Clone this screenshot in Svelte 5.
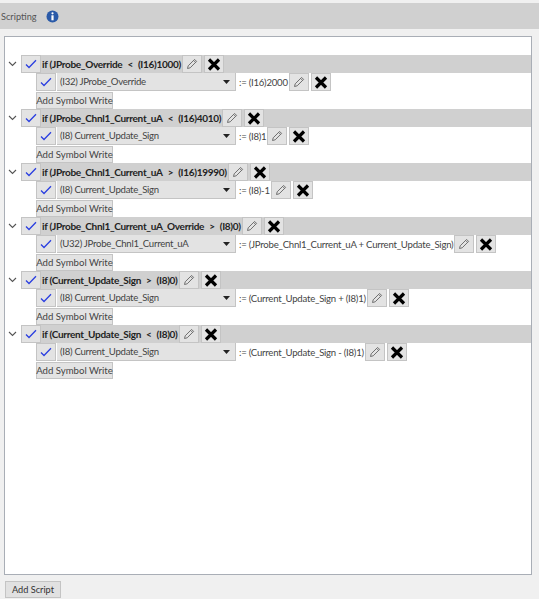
<script>
	const scripts = [
		{ cond: ["if (JProbe_Override", "<", "(I16)1000)"], sym: "(I32) JProbe_Override", val: ":= (I16)2000" },
		{ cond: ["if (JProbe_Chnl1_Current_uA", "<", "(I16)4010)"], sym: "(I8) Current_Update_Sign", val: ":= (I8)1" },
		{ cond: ["if (JProbe_Chnl1_Current_uA", ">", "(I16)19990)"], sym: "(I8) Current_Update_Sign", val: ":= (I8)-1" },
		{ cond: ["if (JProbe_Chnl1_Current_uA_Override", ">", "(I8)0)"], sym: "(U32) JProbe_Chnl1_Current_uA", val: ":= (JProbe_Chnl1_Current_uA + Current_Update_Sign)" },
		{ cond: ["if (Current_Update_Sign", ">", "(I8)0)"], sym: "(I8) Current_Update_Sign", val: ":= (Current_Update_Sign + (I8)1)" },
		{ cond: ["if (Current_Update_Sign", "<", "(I8)0)"], sym: "(I8) Current_Update_Sign", val: ":= (Current_Update_Sign - (I8)1)" }
	];
</script>

{#snippet check()}
	<span class="btn check">
		<svg width="12" height="10" viewBox="0 0 12 10"><path d="M1 5.5 L4 8.5 L11 1.2" fill="none" stroke="#2b3fe0" stroke-width="1.3" /></svg>
	</span>
{/snippet}

{#snippet tools()}
	<span class="btn tool">
		<svg width="12" height="12" viewBox="0 0 12 12"><path d="M1.5 10.5 L2.2 7.8 L8.6 1.4 L10.6 3.4 L4.2 9.8 Z M7.6 2.4 L9.6 4.4" fill="none" stroke="#707070" stroke-width="1" /></svg>
	</span>
	<span class="btn tool">
		<svg width="14" height="13" viewBox="0 0 14 13"><path d="M2 1.5 L12 11.5 M12 1.5 L2 11.5" fill="none" stroke="#000" stroke-width="3.2" /></svg>
	</span>
{/snippet}

<div class="page">
	<div class="title">
		<span>Scripting</span>
		<svg width="13" height="13" viewBox="0 0 13 13">
			<circle cx="6.5" cy="6.5" r="6" fill="#2a5aa8" />
			<circle cx="6.5" cy="3.3" r="1.1" fill="#fff" />
			<rect x="5.4" y="5.3" width="2.2" height="5" fill="#fff" />
		</svg>
	</div>

	<div class="panel">
		{#each scripts as s}
			<div class="script">
				<div class="head">
					<svg class="chev" width="9" height="6" viewBox="0 0 9 6"><path d="M1 1 L4.5 4.5 L8 1" fill="none" stroke="#555" stroke-width="1.1" /></svg>
					<div class="bar">
						{@render check()}
						<b class="cond">{s.cond[0]}<i>{s.cond[1]}</i>{s.cond[2]}</b>
						{@render tools()}
					</div>
				</div>
				<div class="write">
					{@render check()}
					<div class="select">
						<span>{s.sym}</span>
						<svg width="7" height="4" viewBox="0 0 7 4"><path d="M0 0 H7 L3.5 4 Z" fill="#222" /></svg>
					</div>
					<span class="val">{s.val}</span>
					{@render tools()}
				</div>
				<div class="btn add">Add Symbol Write</div>
			</div>
		{/each}
	</div>

	<div class="foot">
		<div class="add-script">Add Script</div>
	</div>
</div>

<style>
	:global(body) {
		background: #f0f0f0;
	}

	.page {
		width: 539px;
		height: 599px;
		padding-top: 3px;
		box-sizing: border-box;
		font-family: Lato, sans-serif;
		font-size: 9.6px;
		color: #444;
		overflow: hidden;
	}

	.title {
		height: 26px;
		background: #d0d0d0;
		display: flex;
		align-items: center;
		gap: 9px;
		padding-left: 1px;
		color: #555;
		font-size: 9.2px;
	}

	.panel {
		margin: 7px 7px 0 4px;
		height: 539px;
		box-sizing: border-box;
		background: #fff;
		border: 1px solid #a9aeb6;
		padding-top: 18px;
	}

	.script {
		height: 54px;
	}

	.head {
		display: flex;
		align-items: center;
		height: 18px;
	}

	.chev {
		margin: 0 4px 0 3px;
		flex: none;
	}

	.bar {
		flex: 1;
		height: 18px;
		display: flex;
		align-items: center;
		background: #d0d0d0;
	}

	.btn {
		box-sizing: border-box;
		border: 1px solid #c4c4c4;
		background: #e3e3e3;
		display: flex;
		align-items: center;
		justify-content: center;
		flex: none;
	}

	.check {
		width: 20px;
		height: 18px;
	}

	.tool {
		width: 20px;
		height: 18px;
		margin-left: 1px;
	}

	.tool + .tool {
		margin-left: 2px;
	}

	.cond {
		color: #222;
		margin-left: 1px;
		white-space: pre;
		font-weight: 700;
		font-size: 10px;
		letter-spacing: -0.3px;
	}

	.cond i {
		font-style: normal;
		margin: 0 5px;
	}

	.write {
		display: flex;
		align-items: center;
		height: 18px;
		margin-left: 31px;
	}

	.select {
		width: 179px;
		height: 18px;
		box-sizing: border-box;
		margin: 0 3px 0 1px;
		padding: 0 5px 0 3px;
		background: #e3e3e3;
		border-bottom: 1px solid #c4c4c4;
		border-right: 1px solid #c4c4c4;
		display: flex;
		align-items: center;
		justify-content: space-between;
		flex: none;
		letter-spacing: -0.28px;
	}

	.val {
		white-space: pre;
		letter-spacing: -0.24px;
	}

	.add {
		width: 77px;
		height: 17px;
		margin: 1px 0 0 31px;
		white-space: nowrap;
	}

	.foot {
		padding: 6px 0 0 5px;
	}

	.add-script {
		width: 56px;
		height: 17px;
		box-sizing: border-box;
		border: 1px solid #c4c4c4;
		background: #e1e1e1;
		display: flex;
		align-items: center;
		justify-content: center;
		color: #333;
		font-size: 9.2px;
	}
</style>
